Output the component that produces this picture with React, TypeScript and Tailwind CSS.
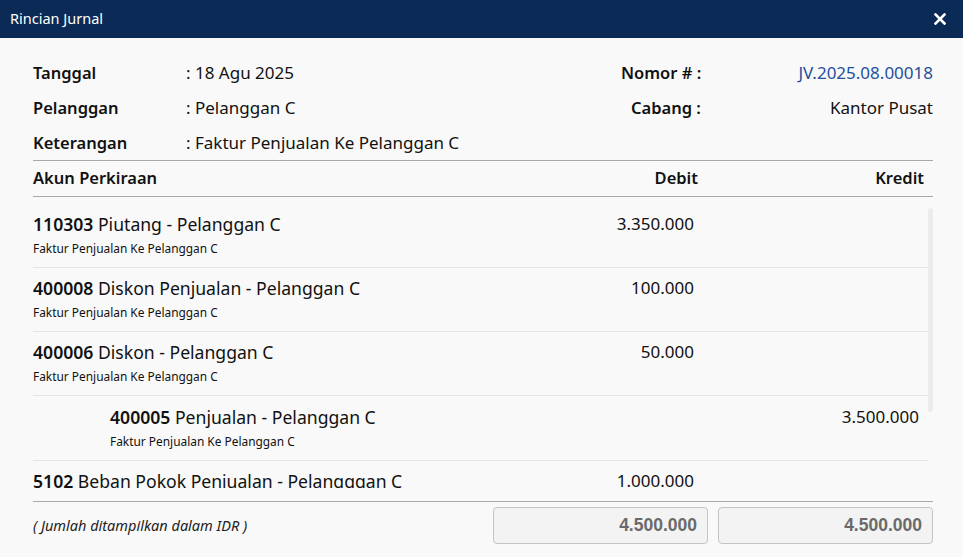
import React from "react";

const rows = [
  { code: "110303", name: "Piutang - Pelanggan C", desc: "Faktur Penjualan Ke Pelanggan C", debit: "3.350.000", kredit: "", indent: false },
  { code: "400008", name: "Diskon Penjualan - Pelanggan C", desc: "Faktur Penjualan Ke Pelanggan C", debit: "100.000", kredit: "", indent: false },
  { code: "400006", name: "Diskon - Pelanggan C", desc: "Faktur Penjualan Ke Pelanggan C", debit: "50.000", kredit: "", indent: false },
  { code: "400005", name: "Penjualan - Pelanggan C", desc: "Faktur Penjualan Ke Pelanggan C", debit: "", kredit: "3.500.000", indent: true },
  { code: "5102", name: "Beban Pokok Penjualan - Pelangggan C", desc: "Faktur Penjualan Ke Pelanggan C", debit: "1.000.000", kredit: "", indent: false },
];

export default function App() {
  return (
    <div
      className="w-[963px] h-[557px] bg-[#f9f9f9] flex flex-col overflow-hidden text-[#111]"
      style={{ fontFamily: '"Noto Sans", "Open Sans", sans-serif' }}
    >
      <div className="h-[38px] shrink-0 bg-[#0b2a55] flex items-center justify-between pl-[10px] pr-[17px]">
        <span className="text-white text-[14.5px]">Rincian Jurnal</span>
        <svg width="12" height="12" viewBox="0 0 12 12">
          <path d="M1.5 1.5 L10.5 10.5 M10.5 1.5 L1.5 10.5" stroke="white" strokeWidth="2.6" strokeLinecap="square" />
        </svg>
      </div>

      <div className="flex-1 flex flex-col pl-[33px] pr-[30px] pt-[23px]">
        <div className="flex">
          <div className="flex-1 flex flex-col leading-[24px] gap-[11px]">
            <div className="flex items-baseline"><span className="w-[153px] font-semibold text-[16.5px]">Tanggal</span><span className="text-[17px]">: 18 Agu 2025</span></div>
            <div className="flex items-baseline"><span className="w-[153px] font-semibold text-[16.5px]">Pelanggan</span><span className="text-[17px]">: Pelanggan C</span></div>
            <div className="flex items-baseline"><span className="w-[153px] font-semibold text-[16.5px]">Keterangan</span><span className="text-[17px]">: Faktur Penjualan Ke Pelanggan C</span></div>
          </div>
          <div className="w-[312px] flex flex-col leading-[24px] gap-[11px]">
            <div className="flex justify-between items-baseline"><span className="font-semibold text-[16.5px]">Nomor # :</span><span className="text-[#1f4f9e] text-[17px]">JV.2025.08.00018</span></div>
            <div className="flex justify-between items-baseline"><span className="font-semibold pl-[10px] text-[16.5px]">Cabang :</span><span className="text-[17px]">Kantor Pusat</span></div>
          </div>
        </div>

        <div className="mt-[5px] border-t border-b border-[#a8a8a8] h-[37px] flex items-center text-[16.5px] font-semibold">
          <div className="flex-1">Akun Perkiraan</div>
          <div className="w-[200px] text-right">Debit</div>
          <div className="w-[235px] text-right pr-[9px]">Kredit</div>
        </div>

        <div className="relative h-[291px] overflow-hidden pt-[6px] pr-[5px]">
          {rows.map((r, i) => (
            <div key={i} className={"flex border-b border-[#e6e6e6] pb-[11px] " + (i === 0 ? "pt-[9px]" : i === 3 ? "pt-[9px]" : "pt-[8px]")}>
              <div className={"flex-1 flex flex-col " + (r.indent ? "pl-[77px]" : "")}>
                <div className="text-[17.6px] leading-[24px] whitespace-nowrap">
                  <span className="font-semibold">{r.code}</span> {r.name}
                </div>
                <div className="text-[11.9px] leading-[16px] mt-[4px] whitespace-nowrap">{r.desc}</div>
              </div>
              <div className="w-[200px] text-right text-[17px] leading-[24px]">{r.debit}</div>
              <div className="w-[234px] text-right pr-[9px] text-[17px] leading-[24px]">{r.kredit}</div>
            </div>
          ))}
          <div className="absolute right-0 top-[11px] w-[5px] h-[204px] rounded-full bg-[#ececec]" />
        </div>

        <div className="h-[13px] shrink-0" />

        <div className="border-t border-[#a8a8a8] flex items-center pt-[5px]">
          <div className="flex-1 italic text-[14.5px] text-[#222]">( Jumlah ditampilkan dalam IDR )</div>
          <div className="flex gap-[10px]">
            <div className="w-[215px] h-[37px] rounded-[4px] border border-[#c4c4c4] bg-[#f3f3f3] flex items-center justify-end pr-[10px] text-[17.5px] font-bold text-[#6a6a6a]" style={{ fontFamily: '"Liberation Sans", Arial, sans-serif' }}>4.500.000</div>
            <div className="w-[215px] h-[37px] rounded-[4px] border border-[#c4c4c4] bg-[#f3f3f3] flex items-center justify-end pr-[10px] text-[17.5px] font-bold text-[#6a6a6a]" style={{ fontFamily: '"Liberation Sans", Arial, sans-serif' }}>4.500.000</div>
          </div>
        </div>
      </div>
    </div>
  );
}
